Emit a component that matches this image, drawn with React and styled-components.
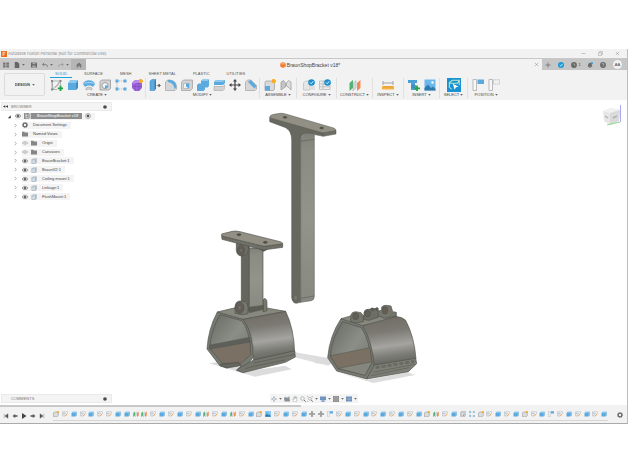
import React from 'react'
import styled, { createGlobalStyle } from 'styled-components';


const tabs = ['SOLID', 'SURFACE', 'MESH', 'SHEET METAL', 'PLASTIC', 'UTILITIES']

const groups = [
    { label: 'CREATE', width: 97, icons: ['newSketch', 'extrude', 'revolve', 'hole', 'pattern', 'form'] },
    { label: 'MODIFY', width: 114, icons: ['pressPull', 'fillet', 'shell', 'combine', 'split', 'move', 'chamfer'] },
    { label: 'ASSEMBLE', width: 37, icons: ['component', 'joint'] },
    { label: 'CONFIGURE', width: 40, icons: ['configure', 'table'] },
    { label: 'CONSTRUCT', width: 36, icons: ['planes'] },
    { label: 'INSPECT', width: 31, icons: ['measure'] },
    { label: 'INSERT', width: 36, icons: ['insert', 'image'] },
    { label: 'SELECT', width: 28, icons: ['select'] },
    { label: 'POSITION', width: 36, icons: ['capture', 'revert'] },
]

const nodes = [
    { name: 'Document Settings', icon: 'gear' },
    { name: 'Named Views', icon: 'folder' },
    { name: 'Origin', icon: 'folder', eye: 'off' },
    { name: 'Canvases', icon: 'folder', eye: 'off' },
    { name: 'BraunBracket:1', icon: 'part', eye: 'on' },
    { name: 'BraunV2:1', icon: 'part', eye: 'on' },
    { name: 'Ceiling mount:1', icon: 'part', eye: 'on' },
    { name: 'Linkage:1', icon: 'part', eye: 'on' },
    { name: 'FlushMount:1', icon: 'part', eye: 'on' },
]

// one letter for each feature in the timeline
const featureIcons = {
    c: 'component',
    s: 'sketch',
    b: 'extrude',
    p: 'planes',
    i: 'image',
    m: 'move',
    k: 'capture',
    h: 'hole',
    r: 'pattern',
}
const features = 'csbsbssbbppsbsbsbpsbpsbcisbsbmmksbsbsbsbsbcpsbhrcsbsbcsbksbsbsb'

const navTools = [
    { icon: 'orbit', menu: true },
    { icon: 'lookAt' },
    { icon: 'pan' },
    { icon: 'zoom' },
    { icon: 'fit', menu: true },
    { icon: 'display', menu: true },
    { icon: 'grid', menu: true },
    { icon: 'views', menu: true },
]

const blue = '#5aa9df'
const box = (
    <>
        <path d="M1 4 3 1H11L9 4Z" fill="#8cc8f0" />
        <path d="M9 4 11 1V9L9 11Z" fill="#3c8cc6" />
        <path d="M1 4H9V11H1Z" fill={blue} />
    </>
)
const cross = <path d="M6 0 8 2.5H6.6V5.4H9.5V4L12 6 9.500 8V6.600H6.600V9.500H8L6 12 4 9.500H5.400V6.600H2.500V8L0 6 2.500 4V5.400H5.400V2.500H4Z" fill="#444" />
const flag = <path d="M10 0 10.800 1.600 12 2 10.800 2.800 10.600 4.200 9.600 3.200 8.200 3.400 8.900 2 8.200.8 9.500 1Z" fill="#fba919" stroke="#fba919" />

const shapes = {
    newSketch: (
        <>
            <path d="M1 2H9.500L2 10.500ZM1 2V10.500H6M9.500 2V6M4 8C6 8 8 6 8 3" fill="none" stroke="#888" strokeWidth=".6" />
            <path d="M0 1H2V3H0ZM8.500 1H10.500V3H8.500ZM0 9.500H2V11.500H0Z" fill="#888" />
            <path d="M9.500 6.500V12M6.800 9.300H12.200" stroke="#22a34a" strokeWidth="1.800" />
        </>
    ),
    extrude: box,
    revolve: (
        <>
            <path d="M0 5C1 0 11 0 12 5L10 8C8 6 4 6 2 8Z" fill={blue} />
            <path d="M0 5C2 2 10 2 12 5 9 4 3 4 0 5Z" fill="#9ad0f3" />
            <path d="M3 9Q6 7 9 9V11Q6 9 3 11Z" fill="#d5d5d5" stroke="#999" strokeWidth=".5" />
        </>
    ),
    hole: (
        <>
            <path d="M1 2.500 2.500 1H11.500V9.500L10 11H1Z" fill="#d2d2d2" stroke="#9c9c9c" strokeWidth=".8" />
            <circle cx="6" cy="6.500" r="3" fill="#eef4f8" stroke="#888" strokeWidth=".7" />
            <path d="M6 6.500H9A3 3 0 0 1 6 9.500Z" fill={blue} />
        </>
    ),
    pattern: (
        <>
            <path d="M2 2H10M2 2V10M2 10H10" stroke="#999" strokeWidth=".6" strokeDasharray="1.200 .8" />
            <path d="M.5.5H3.500V3.500H.5ZM8.500.5H11.500V3.500H8.500ZM.5 8.500H3.500V11.500H.5ZM8.500 8.500H11.500V11.500H8.500Z" fill={blue} />
        </>
    ),
    form: (
        <>
            <path d="M1 4 4 1H8L11 4V9L8 12H4L1 9Z" fill="#9a63d8" />
            <path d="M1 4 4 1H8L9 3 4 5Z" fill="#b58aea" />
            <path d="M4 5V12M1 7.500H11M4 5 9 4M8 4V12" stroke="#7a45bb" strokeWidth=".5" fill="none" />
            {flag}
        </>
    ),
    pressPull: (
        <>
            <path d="M1 2 3 .5H7L5.500 2V11.500H1Z" fill={blue} stroke="#3a86bc" strokeWidth=".5" />
            <path d="M5.500 2 7 .5V10L5.500 11.500Z" fill="#2f7eb8" />
            <path d="M7.500 6.500H11M9.800 5 11.500 6.500 9.800 8Z" stroke="#555" fill="#555" strokeWidth=".6" />
        </>
    ),
    fillet: (
        <>
            <path d="M.5 3 2.500 1H5Q11.500 2 11.500 8V10L10 11.500H.5Z" fill="#d6d6d6" stroke="#a2a2a2" strokeWidth=".7" />
            <path d="M2.500 1H5Q11.500 2 11.500 8L9.500 10Q9 4 3 3Z" fill={blue} />
        </>
    ),
    shell: (
        <>
            <path d="M.5 3 2.500 1H11.500V9.500L9.500 11.500H.5Z" fill="#d2d2d2" stroke="#9c9c9c" strokeWidth=".7" />
            <path d="M2.500 4.500H8V9.500H2.500Z" fill="#f3f3f3" stroke="#999" strokeWidth=".5" />
            <path d="M5 4.500H8V9.500L5 7.500Z" fill={blue} />
        </>
    ),
    combine: (
        <>
            <path d="M0 6 1.500 4.500H4V2L5.500.5H12V7L10.500 8.500H8V10.500L6.500 12H0Z" fill={blue} />
            <path d="M4 2 5.500.5H12L10.500 2Z" fill="#8cc8f0" />
        </>
    ),
    split: (
        <>
            <path d="M1 3 3 1H12V4L10 6H1Z" fill={blue} />
            <path d="M1 3 3 1H12L10 3Z" fill="#8cc8f0" />
            <path d="M1 7.500H10L12 5.500V9.500L10 11.500H1Z" fill="#d2d2d2" stroke="#999" strokeWidth=".5" />
        </>
    ),
    move: cross,
    chamfer: (
        <>
            <path d="M.5 3 2.500 1H6L11.500 6.500V10L10 11.500H.5Z" fill="#d6d6d6" stroke="#a2a2a2" strokeWidth=".7" />
            <path d="M3 3 5.500 1 11.500 7 9.500 9.500Z" fill={blue} />
        </>
    ),
    component: (
        <>
            <path d="M1 3 2 2H10.500V10L9.500 11.500H1Z" fill="#d9d9d9" stroke="#9c9c9c" strokeWidth=".7" />
            <path d="M1 7H6V11.500H1Z" fill={blue} />
            {flag}
        </>
    ),
    newBody: (
        <>
            <path d="M1 4 3 2H10.500V9.500L8.500 11.500H1Z" fill="#dcdcdc" stroke="#8f8f8f" strokeWidth="1" />
            {flag}
        </>
    ),
    joint: (
        <>
            <path d="M1 11V3L3.500 1.500 5.500 4V8L3 9.500Z" fill="#c4c4c4" stroke="#999" strokeWidth=".7" />
            <path d="M11 11V3L8.500 1.500 6.500 4V7L9 8.500Z" fill="#dedede" stroke="#999" strokeWidth=".7" />
        </>
    ),
    configure: (
        <>
            <path d="M.5 4 2.500 2H7V11H.5ZM8 8H12M8 10H12" fill="#e6e6e6" stroke="#bbb" strokeWidth=".7" />
            <circle cx="8.500" cy="3.500" r="3.300" fill="#1d8fd0" />
            <path d="M7 3.500 8.200 4.700 10.300 2.300" fill="none" stroke="#fff" strokeWidth=".9" />
        </>
    ),
    table: (
        <>
            <path d="M.5 2H11V10.500H.5ZM.5 5H11M.5 7.800H11M4 2V10.500" fill="#ececec" stroke="#b4b4b4" strokeWidth=".7" />
            <circle cx="8.500" cy="3.500" r="3.300" fill="#1d8fd0" />
            <path d="M7 3.500 8.200 4.700 10.300 2.300" fill="none" stroke="#fff" strokeWidth=".9" />
        </>
    ),
    planes: (
        <>
            <path d="M.5 4 4 1V9L.5 12Z" fill="#4cb573" />
            <path d="M4 4.500 7 1.500V9L4 12Z" fill="#d9d9d9" stroke="#999" strokeWidth=".4" />
            <path d="M8 4 11.500 1V9L8 12Z" fill="#ee8b58" />
        </>
    ),
    measure: (
        <>
            <path d="M1 2V6M11 2V6M1 4H11" stroke="#888" strokeWidth=".7" />
            <path d="M0 7H12V10.500H0Z" fill="#f6b343" />
            <path d="M2 7V8.500M4 7V8.500M6 7V8.500M8 7V8.500M10 7V8.500" stroke="#b47a1c" strokeWidth=".5" />
        </>
    ),
    insert: (
        <>
            <path d="M0 1H9V4H7V6H8V11H3V6H3V4H0Z" fill="#4b9fd5" />
            <path d="M3 7 7 6M3 9 7 8" stroke="#2c76a8" strokeWidth=".6" />
            <path d="M9 6.500V12M6.300 9.300H12" stroke="#22a34a" strokeWidth="1.800" />
        </>
    ),
    image: (
        <>
            <path d="M.5.5H11.500V11.500H.5Z" fill="#6ab8ec" />
            <path d="M.5 9 4 5.500 7 9 9 7.500 11.500 10V11.500H.5Z" fill="#2f79ad" />
            <circle cx="8.500" cy="3.500" r="1.200" fill="#fff" />
        </>
    ),
    select: (
        <>
            <path d="M0 0H12V12H0Z" fill="#1892d2" />
            <path d="M2 4 4.500 2H10.500L9 4.500 2 4.500ZM2 4.500V8L4 9.500M10.500 2V6" fill="none" stroke="#bfe6c5" strokeWidth=".9" />
            <path d="M5 5 10 7.500 7.700 8 6.500 10Z" fill="#fff" />
        </>
    ),
    capture: (
        <>
            <path d="M1 .5H4.500V11.500H1Z" fill="#f7f7f7" stroke="#a0a0a0" strokeWidth=".7" />
            <path d="M5.500.5H12V5H5.500Z" fill={blue} />
        </>
    ),
    revert: (
        <>
            <path d="M1 .5H4.500V11.500H1Z" fill="#f7f7f7" stroke="#a0a0a0" strokeWidth=".7" />
            <path d="M5.500.8H11.500V5H5.500Z" fill="none" stroke="#999" strokeWidth=".6" strokeDasharray="1 .7" />
        </>
    ),
    sketch: (
        <>
            <path d="M1 1.500H11M1 1.500V10H6M1 5H8M11 1.500V5M4 1.500V10" fill="none" stroke="#a9b6c1" strokeWidth="1" />
            <path d="M6 10.500 10.500 5.500" stroke="#f29b45" strokeWidth="2" />
        </>
    ),
    part: (
        <>
            <path d="M1.500 3.500 4 1H11L9 3.500Z" fill="#e8eef3" stroke="#8c9aa6" strokeWidth=".6" />
            <path d="M9 3.500 11 1V8.500L9 11Z" fill="#8b9fb1" />
            <path d="M1.500 3.500H9V11H1.500Z" fill="#d3dde6" stroke="#8c9aa6" strokeWidth=".9" />
        </>
    ),
    folder: <path d="M0 1.500H4.500L5.500 3H12V11H0Z" fill="#858585" />,
    gear: (
        <>
            <circle cx="6" cy="6" r="3.700" fill="none" stroke="#666" strokeWidth="2.600" />
            <circle cx="6" cy="6" r="5.300" fill="none" stroke="#666" strokeWidth="1.300" strokeDasharray="2.100 2.060" />
        </>
    ),
    eyeOn: (
        <>
            <path d="M0 6Q6-1 12 6 6 13 0 6Z" fill="#e8e8e8" stroke="#777" strokeWidth="1.200" />
            <circle cx="6" cy="6" r="2.600" fill="#666" />
        </>
    ),
    eyeOff: (
        <>
            <path d="M0 6Q6 0 12 6 6 12 0 6Z" fill="none" stroke="#aaa" strokeWidth="1.200" />
            <circle cx="6" cy="6" r="2" fill="none" stroke="#aaa" />
        </>
    ),
    expand: <path d="M4 2 8 6 4 10" fill="none" stroke="#777" strokeWidth="1.400" />,
    expanded: <path d="M9 3V10H2Z" fill="#333" />,
    assembly: <path d="M2 1V10H6M2 5H5M8 1H11V11H8Z" fill="none" stroke="#fff" strokeWidth="1.200" />,
    target: (
        <>
            <circle cx="6" cy="6" r="5" fill="#fff" stroke="#888" strokeWidth="1.200" />
            <circle cx="6" cy="6" r="2.800" fill="#555" />
        </>
    ),
    dot: <circle cx="6" cy="6" r="5.500" fill="#4a4a4a" />,
    collapse: <path d="M5.500 3V9L0 6ZM12 3V9L6.500 6Z" fill="#333" />,
    apps: <path d="M0 1H5V5.500H0ZM6.500 1H12V5.500H6.500ZM0 6.500H5V11H0ZM6.500 6.500H12V11H6.500Z" fill="#777" />,
    file: <path d="M1.500 0H7L10.500 3.500V12H1.500Z" fill="#666" />,
    save: (
        <>
            <path d="M0 1H10.500L12 2.500V11H0Z" fill="#666" />
            <path d="M3 1H9V4.500H3ZM2.500 7H9.500V11H2.500Z" fill="#aaa" />
        </>
    ),
    undo: <path d="M4.500 1.500 1 5 4.500 8M1.500 5H7Q11 5 11 10" fill="none" stroke="#777" strokeWidth="1.700" />,
    redo: <path d="M7.500 1.500 11 5 7.500 8M10.500 5H5Q1 5 1 10" fill="none" stroke="#9c9c9c" strokeWidth="1.700" />,
    home: <path d="M6 1 12 6.500H10.500V11H7.500V8H4.500V11H1.500V6.500H0Z" fill="#777" />,
    cube: (
        <>
            <path d="M6 0 11.500 3V9L6 12 .5 9V3Z" fill="#f47b31" />
            <path d="M6 0 11.500 3 6 6 .5 3Z" fill="#fba468" />
        </>
    ),
    logo: (
        <>
            <path d="M0 0H12V12H0Z" fill="#ef6c1a" />
            <path d="M4 10V2.500H9M4 6H8" stroke="#fff" strokeWidth="1.300" fill="none" />
        </>
    ),
    close: <path d="M2 2 10 10M10 2 2 10" stroke="#888" strokeWidth="1.200" />,
    minimise: <path d="M1 6H11" stroke="#999" strokeWidth="1.200" />,
    restore: <path d="M1 4H8V11H1ZM4 4V1H11V8H8" fill="none" stroke="#999" strokeWidth="1.200" />,
    plus: <path d="M6 1V11M1 6H11" stroke="#777" strokeWidth="1.700" />,
    sync: (
        <>
            <circle cx="6" cy="6" r="6" fill="#1b9ad7" />
            <path d="M3.500 6.500 5.500 8.300 8.800 4" fill="none" stroke="#fff" strokeWidth="1.500" />
        </>
    ),
    clock: (
        <>
            <circle cx="6" cy="6" r="5.800" fill="#666" />
            <path d="M6 2.500V6.300H9" fill="none" stroke="#ccc" strokeWidth="1.200" />
        </>
    ),
    bell: (
        <>
            <path d="M1 9.500Q2.500 8 2.500 5 3 1.500 6 1.500T9.500 5Q9.500 8 11 9.500ZM4.500 10.500H7.500V12H4.500Z" fill="#666" />
            <circle cx="9.500" cy="2.500" r="2.300" fill="#2a9bdc" />
        </>
    ),
    help: (
        <>
            <circle cx="6" cy="6" r="5.800" fill="#666" />
            <path d="M4 4.500Q4.300 3 6 3T8 4.500Q8 5.500 6 6.800V7.500M6 8.500V9.800" fill="none" stroke="#ddd" strokeWidth="1.300" />
        </>
    ),
    orbit: (
        <>
            <path d="M6 0 8 3H4ZM6 12 8 9H4ZM0 6 3 4V8ZM12 6 9 4V8Z" fill="#8fa0ae" />
            <circle cx="6" cy="6" r="2.500" fill="none" stroke="#8fa0ae" />
        </>
    ),
    lookAt: <path d="M0 4 3 1V3H9V1H11V4L12 11H1Z" fill="#8a9299" />,
    pan: <path d="M3.500 11.500 1 7 2 6 3.500 7.500V2.500H5V1.500H6.500V1H8V2.500H9.500V8L8.500 11.500ZM5 2.500V6M6.500 1.500V6M8 2.500V6" fill="#fff" stroke="#888" strokeWidth=".8" />,
    zoom: (
        <>
            <circle cx="5" cy="5" r="3.700" fill="#eef3f6" stroke="#8a8a8a" />
            <path d="M8 8 11.500 11.500" stroke="#666" strokeWidth="1.800" />
        </>
    ),
    fit: (
        <>
            <path d="M.5 3V.5H3M9 .5H11.500V3M.5 9V11.500H3" fill="none" stroke="#999" />
            <circle cx="6" cy="5.500" r="3" fill="#eef3f6" stroke="#8a8a8a" />
            <path d="M8.500 8 11.500 11.500" stroke="#666" strokeWidth="1.700" />
        </>
    ),
    display: <path d="M0 1H12V8.500H0ZM4.500 8.500H7.500V10H9.500V11.500H2.500V10H4.500Z" fill="#6f94bd" />,
    grid: (
        <>
            <path d="M0 0H12V12H0Z" fill="#8d8d8d" />
            <path d="M4 0V12M8 0V12M0 4H12M0 8H12" stroke="#c2c2c2" strokeWidth=".7" />
        </>
    ),
    views: (
        <>
            <path d="M0 1H12V11H0Z" fill="#6c8fb9" />
            <path d="M6 1V11M0 6H12" stroke="#c7d6e6" strokeWidth=".8" />
        </>
    ),
    first: <path d="M2.500 1.500V10.500M10 1.500V10.500L4 6Z" fill="#555" stroke="#555" strokeWidth=".8" />,
    back: <path d="M6.500 2V10L1 6ZM6.500 4.500H11V7.500H6.500Z" fill="#555" />,
    play: <path d="M2 0V12L11 6Z" fill="#444" />,
    forward: <path d="M5.500 2V10L11 6ZM1 4.500H5.500V7.500H1Z" fill="#555" />,
    last: <path d="M9.500 1.500V10.500M2 1.500V10.500L8 6Z" fill="#555" stroke="#555" strokeWidth=".8" />,
}

const Icon = ({ name, size = 12 }) => (
    <svg width={size} height={size} viewBox="0 0 12 12" aria-hidden="true">{shapes[name]}</svg>
)

const Caret = () => (
    <svg width="3" height="2" viewBox="0 0 3 2" aria-hidden="true"><path d="M.2 0H2.800L1.500 1.800Z" fill="#666" /></svg>
)

const Model = () => (
    <ModelSvg viewBox="189 100 250 290" role="img" aria-label="Bracket assembly">
        <defs>
            <linearGradient id="wrap" x1="0" y1="0" x2=".15" y2="1">
                <stop offset="0" stopColor="#706b62" />
                <stop offset=".35" stopColor="#7b7973" />
                <stop offset=".65" stopColor="#a5a4a0" />
                <stop offset=".85" stopColor="#7c7c76" />
                <stop offset="1" stopColor="#686862" />
            </linearGradient>
            <linearGradient id="inside" x1="0" y1="0" x2="1" y2="1">
                <stop offset="0" stopColor="#666962" />
                <stop offset=".5" stopColor="#8a8e87" />
                <stop offset="1" stopColor="#74756e" />
            </linearGradient>
            <linearGradient id="arm" x1="0" y1="0" x2="0" y2="1">
                <stop offset="0" stopColor="#7f8179" />
                <stop offset=".1" stopColor="#8a8c84" />
                <stop offset=".5" stopColor="#92948c" />
                <stop offset="1" stopColor="#878981" />
            </linearGradient>
        </defs>

        {/* ceiling arm */}
        <g transform="translate(255 105) scale(.33333)" stroke="#55574f" strokeWidth="1.500" strokeLinejoin="round">
            <path d="M44 38 44 50 92 68Q110 78 110 105V578Q112 594 124 595L137 592V105Q140 84 160 85L205 94V82Z" fill="#676961" />
            <path d="M137 112Q139 88 160 84L178 90V575Q177 585 169 587L137 592Z" fill="url(#arm)" />
            <path d="M137 109 178 103M137 580 177 573" strokeWidth="1.500" fill="none" />
            <path d="M44 38Q44 30 56 28L76 25Q84 24 92 27L236 69Q244 72 243 78L204 84Z" fill="#928f84" />
            <path d="M204 84 243 77V87L205 94Z" fill="#6d6f66" />
            <ellipse cx="90" cy="37" rx="6" ry="3" fill="#4d4e48" />
            <ellipse cx="200" cy="69" rx="6" ry="3" fill="#4d4e48" />
            <ellipse cx="122" cy="578" rx="6" ry="9" fill="#777970" />
        </g>

        {/* hinged mount */}
        <g transform="translate(195 220) scale(.33333)" stroke="#50524b" strokeWidth="2" strokeLinejoin="round">
            <path d="M300 397 422 418 400 437 292 410Z" fill="#dedede" stroke="none" />
            <path d="M42 430 75 425 170 452 270 437 290 448 180 470Z" fill="#dcdcdc" stroke="none" />
            <path d="M67 276 145 298Q172 330 175 412L140 455 125 450 138 438 130 428 95 444 75 438 36 387Q40 326 67 276Z" fill="#777a72" />
            <path d="M75 284 140 302Q165 330 167 404L135 430 82 428 44 385Q48 330 75 284Z" fill="url(#inside)" />
            <path d="M44 384 165 362 167 404 138 430 82 430Z" fill="#7a7064" strokeWidth="1.500" />
            <path d="M44 375 164 352 166 366 44 388Z" fill="#5d5f58" strokeWidth="1" />
            <path d="M67 276 126 262 215 264 272 274 145 298Z" fill="#88897e" />
            <path d="M145 298 272 274Q297 325 299 398L176 422Q177 340 145 298Z" fill="url(#wrap)" />
            <path d="M176 420 299 392 301 411 271 427 144 458 125 451 140 440Z" fill="#74766e" />
            <path d="M176 429 300 403M150 446 180 438 270 420" fill="none" strokeWidth="1.500" />
            <path d="M75 433 130 427 138 437 95 444Z" fill="#65675f" />
            <path d="M204 275V245Q204 234 211 236 217 239 216 250V272Z" fill="#77796f" />
            <path d="M139 78H163V272H139Z" fill="#65675f" />
            <path d="M163 84H204V265L163 275Z" fill="url(#arm)" />
            <path d="M163 262 204 256 206 268 163 278Z" fill="#5c5e56" strokeWidth="1.500" />
            <path d="M120 280V262Q121 243 135 243L150 245Q159 250 159 262V281L141 284Z" fill="#77796f" />
            <ellipse cx="134" cy="263" rx="13" ry="17" fill="#655e56" />
            <ellipse cx="134" cy="263" rx="5" ry="7" fill="#77706a" strokeWidth="1.500" />
            <path d="M124 70V92Q126 107 140 108 157 106 160 92V76Z" fill="#6d6e65" />
            <ellipse cx="138" cy="91" rx="11" ry="14" fill="#655e56" />
            <ellipse cx="138" cy="91" rx="4" ry="6" fill="#77706a" strokeWidth="1.500" />
            <path d="M192 86 206 94 217 88Z" fill="#55574f" />
            <path d="M80 48 81 58 205 90 263 82V70L207 79Z" fill="#6f7168" />
            <path d="M80 42 112 34Q122 32 135 35L255 65Q263 67 263 72L207 79 80 48Z" fill="#928f84" />
            <ellipse cx="132" cy="44" rx="6" ry="3" fill="#4d4e48" />
            <ellipse cx="211" cy="67" rx="6" ry="3" fill="#4d4e48" />
        </g>

        {/* flush mount */}
        <g transform="translate(315 295) scale(.33333)" stroke="#50524b" strokeWidth="2" strokeLinejoin="round">
            <path d="M0 186 40 192 50 208 0 205ZM45 225 155 255 278 232 300 240 175 264Z" fill="#dcdcdc" stroke="none" />
            <path d="M78 71 143 92Q172 135 178 212L155 252 65 228 38 188Q44 122 78 71Z" fill="#777a72" />
            <path d="M83 80 139 98Q164 135 170 206L150 240 70 221 46 184Q50 128 83 80Z" fill="url(#inside)" />
            <path d="M46 182 165 158 171 204 70 222Z" fill="#7a7064" strokeWidth="1.500" />
            <path d="M70 220 172 200 150 241Z" fill="#85877f" strokeWidth="1.500" />
            <path d="M78 71 110 62 240 63 258 70 143 92Z" fill="#88897e" />
            <path d="M143 92 243 65Q262 65 272 76 298 125 303 192L178 214Q172 140 143 92Z" fill="url(#wrap)" />
            <path d="M178 210 302 190 305 206 280 230 155 252Z" fill="#7d7f77" />
            <path d="M174 232 300 208M168 242 282 218" fill="none" strokeWidth="1.500" />
            <path d="M182 218 298 199" stroke="#686a62" strokeWidth="8" strokeDasharray="12 6" />
            <path d="M107 80V62Q110 50 122 50L138 53 145 62V80L122 84Z" fill="#74766c" />
            <path d="M147 74V52Q150 42 160 43L185 40 190 46V67L162 76Z" fill="#6d6f66" />
            <path d="M190 62V48L200 46V36Q206 30 214 31L228 33 233 50 244 52V63L208 70Z" fill="#74766c" />
            <ellipse cx="122" cy="64" rx="9" ry="10" fill="#655e56" />
            <ellipse cx="158" cy="56" rx="8" ry="10" fill="#655e56" />
            <ellipse cx="210" cy="46" rx="8" ry="11" fill="#655e56" />
            <ellipse cx="172" cy="43" rx="5" ry="4" fill="#5c5e56" />
            <ellipse cx="186" cy="42" rx="4" ry="4" fill="#5c5e56" />
        </g>
    </ModelSvg>
)

const ViewCube = () => (
    <svg width="22" height="24" viewBox="0 0 22 24" role="img" aria-label="View cube">
        <path d="M2 6 10 3 19 5 18 16 9 20 3 16Z" fill="#e6e6e6" />
        <path d="M2 6 10 3 19 5 9 8Z" fill="#f1f1f1" />
        <path d="M9 8 19 5 18 16 9 20Z" fill="#dadada" />
        <path d="M4 11 7 13M12 13 16 11" stroke="#b0b0b0" strokeWidth="1.500" />
        <path d="M6 20 19 17" stroke="#8edb8e" strokeWidth="1" />
        <path d="M19.500 0V17" stroke="#a9a9f5" strokeWidth="1" />
    </svg>
)

const App = () => {
    return (
        <>
            <GlobalStyle />
            <Window>
                <TitleBar>
                    <Icon name="logo" size={6} />
                    <AppTitle>Autodesk Fusion Personal (Not for Commercial Use)</AppTitle>
                    <WindowButtons>
                        <IconButton aria-label="Minimise"><Icon name="minimise" size={5} /></IconButton>
                        <IconButton aria-label="Restore"><Icon name="restore" size={5} /></IconButton>
                        <IconButton aria-label="Close"><Icon name="close" size={5} /></IconButton>
                    </WindowButtons>
                </TitleBar>

                <DocumentBar>
                    <QuickAccess>
                        <IconButton aria-label="Data panel"><Icon name="apps" size={6} /></IconButton>
                        <IconButton aria-label="File"><Icon name="file" size={6} /><Caret /></IconButton>
                        <IconButton aria-label="Save"><Icon name="save" size={6} /></IconButton>
                        <IconButton aria-label="Undo"><Icon name="undo" size={6} /><Caret /></IconButton>
                        <IconButton aria-label="Redo"><Icon name="redo" size={6} /><Caret /></IconButton>
                    </QuickAccess>
                    <HomeTab aria-label="Home"><Icon name="home" size={6} /></HomeTab>
                    <DocumentTab>
                        <DocumentName><Icon name="cube" size={6} />BraunShopBracket v18*</DocumentName>
                        <IconButton aria-label="Close document"><Icon name="close" size={5} /></IconButton>
                    </DocumentTab>
                    <Account>
                        <IconButton aria-label="New document"><Icon name="plus" size={6} /></IconButton>
                        <IconButton aria-label="Online"><Icon name="sync" size={6} /></IconButton>
                        <IconButton aria-label="Jobs"><Icon name="clock" size={6} />1</IconButton>
                        <IconButton aria-label="Notifications"><Icon name="bell" size={6} /></IconButton>
                        <IconButton aria-label="Help"><Icon name="help" size={6} /></IconButton>
                        <Avatar>AA</Avatar>
                    </Account>
                </DocumentBar>

                <Ribbon>
                    <Workspace>
                        <WorkspaceSelect aria-label="Workspace"><option>DESIGN</option></WorkspaceSelect>
                        <Caret />
                    </Workspace>
                    <Tools>
                        <TabList>
                            {tabs.map((tab, index) => <Tab key={tab} $active={index === 0}>{tab}</Tab>)}
                        </TabList>
                        <Groups>
                            {groups.map((group) => (
                                <Group key={group.label} $width={group.width}>
                                    <GroupIcons>
                                        {group.icons.map((icon) => (
                                            <IconButton key={icon} aria-label={icon}>
                                                <Icon name={icon} size={icon === 'select' ? 14 : 12} />
                                            </IconButton>
                                        ))}
                                    </GroupIcons>
                                    <GroupLabel>{group.label}<Caret /></GroupLabel>
                                </Group>
                            ))}
                        </Groups>
                    </Tools>
                </Ribbon>

                <Canvas>
                    <Stage>
                        <Browser>
                            <PanelBar>
                                <Icon name="collapse" size={5} />
                                <PanelTitle>BROWSER</PanelTitle>
                                <Icon name="dot" size={4} />
                            </PanelBar>
                            <Tree>
                                <Node $root>
                                    <Icon name="expanded" size={5} />
                                    <NodeBody>
                                        <Icon name="eyeOn" size={6} />
                                        <RootName><Icon name="assembly" size={6} />BraunShopBracket v18</RootName>
                                        <Icon name="target" size={6} />
                                    </NodeBody>
                                </Node>
                                {nodes.map((node) => (
                                    <Node key={node.name}>
                                        <Icon name="expand" size={5} />
                                        <NodeBody>
                                            {node.eye && <Icon name={node.eye === 'on' ? 'eyeOn' : 'eyeOff'} size={6} />}
                                            <Icon name={node.icon} size={6} />
                                            <NodeName>{node.name}</NodeName>
                                        </NodeBody>
                                    </Node>
                                ))}
                            </Tree>
                        </Browser>
                        <Model />
                        <CubeSlot><ViewCube /></CubeSlot>
                    </Stage>
                    <Dock>
                        <PanelBar>
                            <PanelTitle $indent>COMMENTS</PanelTitle>
                            <Icon name="dot" size={4} />
                        </PanelBar>
                        <NavBar>
                            {navTools.map((tool) => (
                                <IconButton key={tool.icon} aria-label={tool.icon}>
                                    <Icon name={tool.icon} size={6} />
                                    {tool.menu && <Caret />}
                                </IconButton>
                            ))}
                        </NavBar>
                    </Dock>
                </Canvas>

                <ScrollTrack><ScrollThumb /></ScrollTrack>
                <Timeline>
                    <Playback>
                        {['first', 'back', 'play', 'forward', 'last'].map((name) => (
                            <IconButton key={name} aria-label={name}><Icon name={name} size={6} /></IconButton>
                        ))}
                    </Playback>
                    <Features>
                        {features.split('').map((key, index) => (
                            <Feature key={index}><Icon name={key === 'c' ? 'newBody' : featureIcons[key]} size={6} /></Feature>
                        ))}
                    </Features>
                    <IconButton aria-label="Timeline settings"><Icon name="gear" size={6} /></IconButton>
                </Timeline>
            </Window>
        </>
    )
}

export default App;

const GlobalStyle = createGlobalStyle`
* { box-sizing: border-box; }
body {
    margin: 0;
    background: #fff;
    color: #444;
    font: 4px/6px "Liberation Sans", Arial, sans-serif;
}
svg { display: block; flex: none; }
button, select {
    font: inherit;
    color: inherit;
    background: none;
    border: 0;
    padding: 0;
    margin: 0;
}
`
const Window = styled.main`
margin-top: 49px;
border-right: 1px solid #bdbdbd;
border-bottom: 1px solid #aaa;
background: #fff;
`
const TitleBar = styled.header`
display: flex;
align-items: center;
gap: 1px;
height: 9px;
padding: 0 7px 0 1px;
background: #f2f2f2;
`
const AppTitle = styled.h1`
margin: 0;
flex: 1;
font: 4px/6px Inter, "Open Sans", sans-serif;
color: #8a8a8a;
`
const WindowButtons = styled.div`
display: flex;
gap: 12px;
`
const IconButton = styled.button`
display: flex;
align-items: center;
gap: 2px;
`
const DocumentBar = styled.div`
display: flex;
height: 12px;
border-top: 1px solid #c8c8c8;
background: #f2f2f2;
`
const QuickAccess = styled.div`
display: flex;
align-items: center;
justify-content: space-between;
width: 71px;
padding: 0 2px 0 3px;
background: #c6c6c6;
`
const HomeTab = styled.button`
display: flex;
align-items: center;
justify-content: center;
width: 15px;
background: #b5b5b5;
`
const DocumentTab = styled.div`
flex: 1;
display: flex;
align-items: center;
padding-right: 3px;
`
const DocumentName = styled.div`
flex: 1;
display: flex;
align-items: center;
justify-content: center;
gap: 1px;
font-size: 5px;
`
const Account = styled.div`
display: flex;
align-items: center;
justify-content: space-between;
width: 85px;
padding: 0 5px 0 3px;
background: #c6c6c6;
`
const Avatar = styled.button`
width: 9px;
height: 9px;
border-radius: 50%;
background: #f0f0f0;
text-align: center;
`
const Ribbon = styled.section`
display: flex;
gap: 4px;
height: 30px;
padding: 0 4px;
background: #f2f2f2;
`
const Workspace = styled.div`
display: flex;
align-items: center;
justify-content: center;
gap: 1px;
width: 41px;
height: 23px;
margin-top: 3px;
border: 1px solid #dcdcdc;
border-radius: 2px;
`
const WorkspaceSelect = styled.select`
appearance: none;
font-weight: bold;
`
const Tools = styled.div`
flex: 1;
`
const TabList = styled.nav`
display: flex;
gap: 7px;
height: 8px;
padding-left: 1px;
`
const Tab = styled.button`
padding: 0 5px;
border-bottom: 1px solid ${({ $active }) => ($active ? '#1ba1dc' : 'transparent')};
color: ${({ $active }) => ($active ? '#1b93cc' : '#555')};
`
const Groups = styled.div`
display: flex;
`
const Group = styled.div`
display: flex;
flex-direction: column;
align-items: center;
width: ${({ $width }) => $width}px;
height: 20px;
border-right: 1px solid #e0e0e0;

&:last-child {
    border-right: 0;
}
`
const GroupIcons = styled.div`
display: flex;
align-items: center;
gap: 4px;
height: 14px;
`
const GroupLabel = styled.button`
display: flex;
align-items: center;
gap: 1px;
white-space: nowrap;
`
const Canvas = styled.section`
padding: 0 0 2px 1px;
`
const Stage = styled.div`
display: grid;
grid-template-columns: 111px 1fr 111px;
`
const Browser = styled.aside`
padding-top: 2px;
`
const PanelBar = styled.div`
display: flex;
align-items: center;
gap: 3px;
width: 111px;
height: 9px;
padding: 0 4px 0 1px;
border: 1px solid #eaeaea;
background: #f4f4f4;
`
const PanelTitle = styled.h2`
flex: 1;
margin: 0;
padding-left: ${({ $indent }) => ($indent ? 8 : 0)}px;
font: inherit;
color: #777;
`
const Tree = styled.ul`
display: grid;
grid-auto-rows: 1fr;
height: 89px;
margin: 1px 0 0;
padding: 0;
list-style: none;
`
const Node = styled.li`
display: flex;
align-items: center;
gap: ${({ $root }) => ($root ? 3 : 4)}px;
padding-left: ${({ $root }) => ($root ? 6 : 12)}px;
`
const NodeBody = styled.div`
display: flex;
align-items: center;
gap: 3px;
height: 7px;
padding: 0 4px 0 0;
background: #f4f4f4;
`
const NodeName = styled.span`
padding-left: 2px;
`
const RootName = styled.span`
display: flex;
align-items: center;
gap: 6px;
height: 6px;
padding: 0 4px 0 1px;
background: #8d8d8d;
color: #fff;
`
const ModelSvg = styled.svg`
width: 250px;
height: 290px;
justify-self: center;
`
const CubeSlot = styled.div`
display: flex;
justify-content: flex-end;
align-items: flex-start;
padding: 5px 4px 0 0;
`
const Dock = styled.div`
display: grid;
grid-template-columns: 111px 1fr 111px;
align-items: center;
margin-top: 4px;
`
const NavBar = styled.div`
display: flex;
align-items: center;
justify-content: space-between;
justify-self: center;
width: 88px;
height: 9px;
padding: 0 1px;
background: #f4f4f4;
`
const ScrollTrack = styled.div`
height: 2px;
background: #f2f2f2;
`
const ScrollThumb = styled.div`
width: 48%;
height: 2px;
background: #c8c8c8;
`
const Timeline = styled.footer`
display: flex;
align-items: center;
height: 16px;
padding-right: 4px;
background: #f2f2f2;
`
const Playback = styled.div`
display: flex;
gap: 3px;
padding: 2px 0 0 3px;
`
const Features = styled.ol`
flex: 1;
display: flex;
justify-content: space-between;
margin: 0 9px 0 8px;
padding: 0;
list-style: none;
border-bottom: 1px solid #d6d6d6;
`
const Feature = styled.li`
display: flex;
justify-content: center;
width: 6px;
height: 10px;
padding-top: 1px;
`
